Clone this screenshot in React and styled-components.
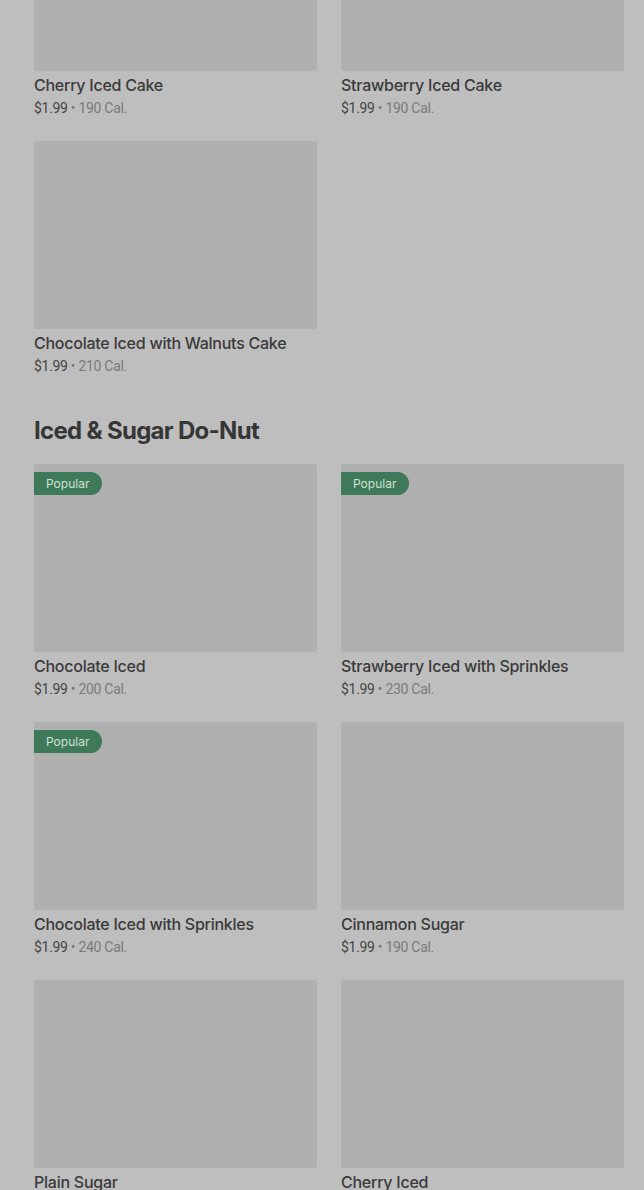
import React from "react";
import styled, { createGlobalStyle } from "styled-components";

const GlobalStyle = createGlobalStyle`
  html, body {
    margin: 0;
    padding: 0;
    background: #bebebe;
  }
  body {
    font-family: Inter, "Noto Sans", sans-serif;
    color: #383838;
    overflow: hidden;
  }
`;

const Page = styled.div`
  padding: 0 20px 0 34px;
  margin-top: -117px;
`;

const Section = styled.section`
  margin-bottom: 15px;
`;

const Heading = styled.h2`
  margin: 39px 0 17px;
  font-size: 24px;
  line-height: 32px;
  font-weight: 650;
  letter-spacing: -0.7px;
  color: #363636;
`;

const Grid = styled.div`
  display: grid;
  grid-template-columns: 283px 283px;
  column-gap: 24px;
  row-gap: 23px;
`;

const Card = styled.div`
  display: flex;
  flex-direction: column;
`;

const Photo = styled.div`
  position: relative;
  height: 188px;
  background: #b0b0b0;
  border-radius: 2px;
`;

const Badge = styled.span`
  position: absolute;
  top: 8px;
  left: 0;
  height: 23px;
  padding: 0 13px 0 12px;
  display: flex;
  align-items: center;
  background: #3e7a5a;
  color: #cfe0d5;
  font-size: 12px;
  border-radius: 0 12px 12px 0;
`;

const Title = styled.div`
  margin-top: 4px;
  font-size: 16px;
  line-height: 20px;
  font-weight: 500;
  letter-spacing: -0.25px;
  color: #3a3a3a;
`;

const Meta = styled.div`
  margin-top: 3px;
  font-family: Roboto, "Liberation Sans", sans-serif;
  font-size: 14px;
  line-height: 20px;
  letter-spacing: -0.3px;
  color: #7a7a7a;
`;

const Price = styled.span`
  color: #454545;
`;

const sections = [
  {
    title: null,
    items: [
      { name: "Cherry Iced Cake", cal: 190 },
      { name: "Strawberry Iced Cake", cal: 190 },
      { name: "Chocolate Iced with Walnuts Cake", cal: 210 },
    ],
  },
  {
    title: "Iced & Sugar Do-Nut",
    items: [
      { name: "Chocolate Iced", cal: 200, popular: true },
      { name: "Strawberry Iced with Sprinkles", cal: 230, popular: true },
      { name: "Chocolate Iced with Sprinkles", cal: 240, popular: true },
      { name: "Cinnamon Sugar", cal: 190 },
      { name: "Plain Sugar", cal: 190 },
      { name: "Cherry Iced", cal: 190 },
    ],
  },
];

const MenuCard = ({ item }) => (
  <Card>
    <Photo>{item.popular && <Badge>Popular</Badge>}</Photo>
    <Title>{item.name}</Title>
    <Meta>
      <Price>$1.99</Price> • {item.cal} Cal.
    </Meta>
  </Card>
);

export default function App() {
  return (
    <>
      <GlobalStyle />
      <Page>
        {sections.map((s, i) => (
          <Section key={i}>
            {s.title && <Heading>{s.title}</Heading>}
            <Grid>
              {s.items.map((item) => (
                <MenuCard key={item.name} item={item} />
              ))}
            </Grid>
          </Section>
        ))}
      </Page>
    </>
  );
}
